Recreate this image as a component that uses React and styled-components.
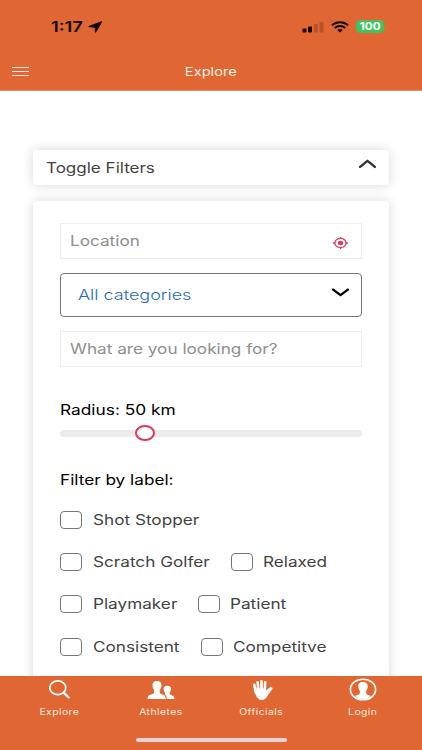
import React, { useState } from 'react'
import styled, { createGlobalStyle } from "styled-components";

const GlobalStyle = createGlobalStyle`
* {
box-sizing: border-box;
}
body {
margin: 0;
background-color: white;
font-family: Inter, "Liberation Sans", sans-serif;
}
`
const Container = styled.div`
width: 422px;
height: 750px;
display: flex;
flex-direction: column;
overflow: hidden;
background-color: white;
`
const Text = styled.span`
display: inline-block;
white-space: nowrap;
font-family: ${props=> props.$family || "inherit"};
font-size: ${props=> props.$size || 14.2}px;
font-weight: ${props=> props.$weight || 400};
line-height: 20px;
color: ${props=> props.$color || "#434343"};
transform: scaleX(${props=> props.$stretch || 1.21});
transform-origin: ${props=> props.$origin || "left"} center;
letter-spacing: ${props=> props.$spacing || 0}px;
`

// top
const Header = styled.header`
height: 91px;
flex: none;
background-color: #e06733;
border-bottom: 1px solid #e38b66;
`
const StatusBar = styled.div`
height: 53px;
padding: 0 36px 0 51px;
display: flex;
align-items: center;
justify-content: space-between;
`
const Clock = styled.div`
display: flex;
align-items: center;
`
const ClockText = styled.div`
width: 37px;
display: flex;
`
const Status = styled.div`
display: flex;
align-items: center;
`
const Signal = styled.svg`
width: 22px;
height: 12px;
margin-right: 7px;
`
const Wifi = styled.svg`
width: 18px;
height: 12px;
margin-right: 7px;
`
const Battery = styled.div`
width: 28px;
height: 12.5px;
border-radius: 4.5px;
background-color: #3fc35c;
display: flex;
align-items: center;
justify-content: center;
`
const BatteryNub = styled.div`
width: 1.5px;
height: 4px;
margin-left: 0.5px;
border-radius: 0 2px 2px 0;
background-color: #7fa447;
`
const TitleBar = styled.div`
height: 37px;
padding: 0 12px;
display: grid;
grid-template-columns: 60px 1fr 60px;
align-items: center;
justify-items: center;
`
const Menu = styled.button`
width: 17px;
height: 9px;
padding: 0;
border: none;
background: none;
justify-self: start;
display: flex;
flex-direction: column;
justify-content: space-between;
`
const MenuLine = styled.span`
width: 17px;
height: 1.4px;
background-color: #fbe9df;
`

// filters
const Main = styled.main`
flex: 1;
min-height: 0;
padding: 59px 33px 0;
overflow: hidden;
`
const Card = styled.section`
background-color: white;
border-radius: 4px;
box-shadow: 0 0 12px rgba(0, 0, 0, 0.16);
`
const Toggle = styled(Card)`
height: 35px;
padding: 0 13px;
margin-bottom: 16px;
display: flex;
align-items: center;
justify-content: space-between;
`
const Panel = styled(Card)`
height: 520px;
padding: 22px 27px;
`
const Chevron = styled.svg`
width: 17px;
height: 9.5px;
margin-bottom: ${props=> props.$raise || 0}px;
fill: none;
stroke: ${props=> props.$color};
stroke-width: 2.2;
stroke-linecap: round;
stroke-linejoin: round;
`
const Field = styled.div`
height: 36px;
padding: 0 13px 0 9px;
border: 1px solid #ececec;
display: flex;
align-items: center;
justify-content: space-between;
`
const Select = styled.div`
height: 44px;
margin: 14px 0;
padding: 0 12px 0 17px;
border: 1px solid #757575;
border-radius: 4px;
display: flex;
align-items: center;
justify-content: space-between;
`
const Target = styled.svg`
width: 15px;
height: 12px;
margin-top: 4px;
`
const Heading = styled.div`
height: 20px;
margin-top: ${props=> props.$top}px;
`
const Slider = styled.div`
height: 16px;
margin-top: 6px;
display: flex;
align-items: center;
`
const Track = styled.div`
flex: 1;
height: 7px;
padding-left: 75px;
border-radius: 4px;
background-color: #ebebeb;
display: flex;
align-items: center;
`
const Thumb = styled.div`
width: 20px;
height: 16px;
flex: none;
border: 2px solid #dc3a58;
border-radius: 50%;
background-color: white;
`
const Labels = styled.div`
margin-top: 10px;
`
const LabelRow = styled.div`
height: 42.2px;
display: flex;
align-items: center;
`
const Label = styled.label`
width: ${props=> props.$width}px;
flex: none;
display: flex;
align-items: center;
`
const Check = styled.input`
appearance: none;
width: 22px;
height: 18px;
margin: 0 10.5px 0 0;
flex: none;
border: 1px solid #777;
border-radius: 4px;
background-color: ${props=> props.checked ? "#dc3a58" : "white"};
`

// bottom
const TabBar = styled.nav`
height: 74px;
flex: none;
background-color: #e06733;
display: flex;
flex-direction: column;
align-items: center;
`
const Tabs = styled.div`
width: 404px;
height: 62px;
display: flex;
`
const Tab = styled.div`
flex: 1;
display: flex;
flex-direction: column;
align-items: center;
svg {
width: ${props=> props.$icon}px;
height: 26px;
flex: none;
}
`
const HomeBar = styled.div`
width: 151px;
height: 4px;
border-radius: 3px;
background-color: #e2d3d5;
`

const rows = [
    [{ name: "Shot Stopper", width: 170 }],
    [{ name: "Scratch Golfer", width: 170.5 }, { name: "Relaxed", width: 100 }],
    [{ name: "Playmaker", width: 137.5 }, { name: "Patient", width: 100 }],
    [{ name: "Consistent", width: 140.5 }, { name: "Competitve", width: 130 }],
]

const SearchIcon = () => (
    <svg viewBox="0 0 22 26" fill="none" stroke="white" strokeWidth="1.7">
        <ellipse cx="8.8" cy="11.8" rx="8" ry="6.9"/>
        <path d="M14.6 16.7l5 4.6" strokeWidth="2.3" strokeLinecap="round"/>
    </svg>
)

const PeopleIcon = () => (
    <svg viewBox="0 0 28 26" fill="white">
        <path d="M10 5C6.800 5 5.400 6.800 5.500 9.300c.1 1.900.5 3.300 1.400 4.400.5.900.4 3.100-.3 3.700-.8.700-2.900 1-4.400 1.800C1 19.900.6 21 .5 23h18.200c-.1-2-.5-3.100-1.700-3.800-1.500-.8-2.900-1.100-3.700-1.800-.7-.6-.8-2.800-.3-3.700.9-1.100 1.400-2.500 1.500-4.400C14.600 6.800 13.200 5 10 5z"/>
        <path d="M20.300 9.700c-2.600 0-3.800 1.400-3.700 3.400.1 1.500.5 2.500 1.200 3.300.3.600.3 1.600-.1 2.100 1.300.7 2 1.600 2.100 4.500h7.700c-.1-1.800-.5-2.600-1.500-3.100-1.200-.6-2.300-.8-2.900-1.300-.5-.4-.5-1.600-.2-2.200.7-.8 1.100-1.800 1.200-3.300.1-2-1.200-3.400-3.800-3.400z"/>
    </svg>
)

const HandIcon = () => (
    <svg viewBox="0 0 24 26" fill="none" stroke="white" strokeWidth="2.6" strokeLinecap="round" strokeLinejoin="round">
        <path d="M4.300 8.700l1.500 8M7.600 6.200l.9 9M11.500 5.200v10M15.200 6.400l-.5 9"/>
        <path d="M4.600 12.500l1 4.500c.6 3.200 2.400 6.700 5.800 6.700 3 0 4.500-1.300 6-4.200l4.500-6.300c1.300-1.600-.5-2.400-2-1.500l-4 3.200-.5-2z" fill="white" strokeWidth="0.6"/>
    </svg>
)

const ContactIcon = () => (
    <svg viewBox="0 0 28 26">
        <ellipse cx="14" cy="13.500" rx="12.600" ry="10.300" fill="none" stroke="white" strokeWidth="1.600"/>
        <path d="M13.800 6c-3.300 0-4.700 1.800-4.600 4.300.1 1.800.5 3.100 1.400 4.200.5.9.4 3.200-.3 3.800-.8.6-2.800.9-4.300 1.600 1.900 2 4.800 3.300 8 3.300s6.100-1.300 8-3.300c-1.600-.7-3.500-1-4.300-1.600-.7-.6-.8-2.900-.3-3.800.8-1.100 1.300-2.400 1.400-4.200.1-2.500-1.700-4.300-5-4.300z" fill="white"/>
    </svg>
)

const tabs = [
    { name: "Explore", icon: <SearchIcon/>, width: 22 },
    { name: "Athletes", icon: <PeopleIcon/>, width: 28 },
    { name: "Officials", icon: <HandIcon/>, width: 24 },
    { name: "Login", icon: <ContactIcon/>, width: 28 },
]

const App = () => {

    const [picked, setPicked] = useState([]);
    const handleCheck = (name)=>{
        setPicked(picked.includes(name) ? picked.filter((p)=> p !== name) : [...picked, name]);
    };

    return (
        <Container>
            <GlobalStyle/>
            <Header>
                <StatusBar>
                    <Clock>
                        <ClockText><Text $size={14.8} $weight={600} $color="#160500" $stretch={1.24}>1:17</Text></ClockText>
                        <svg width="15" height="12" viewBox="0 0 15 12">
                            <path d="M13.400.9L1.200 5.500l5.900.5.500 4.900z" fill="#160500" stroke="#160500" strokeWidth="1.300" strokeLinejoin="round"/>
                        </svg>
                    </Clock>
                    <Status>
                        <Signal viewBox="0 0 22 12" fill="#160500">
                            <rect x="0.5" y="7.500" width="4" height="4" rx="1"/>
                            <rect x="6" y="5.500" width="4" height="6" rx="1"/>
                            <rect x="11.800" y="3" width="4" height="8.500" rx="1" fill="#b95127"/>
                            <rect x="17.500" y="0.800" width="4" height="10.700" rx="1" fill="#b95127"/>
                        </Signal>
                        <Wifi viewBox="0 0 18 12" fill="none" stroke="#160500" strokeWidth="2">
                            <path d="M.9 4.300C5.300.2 12.700.2 17.100 4.300"/>
                            <path d="M3.800 7C6.600 4.400 11.400 4.400 14.200 7"/>
                            <path d="M6.300 8.900C7.800 7.600 10.200 7.600 11.700 8.900L9 11.500z" fill="#160500" stroke="none"/>
                        </Wifi>
                        <Battery><Text $size={10.4} $weight={700} $color="white" $stretch={1.13} $origin="center">100</Text></Battery>
                        <BatteryNub/>
                    </Status>
                </StatusBar>
                <TitleBar>
                    <Menu><MenuLine/><MenuLine/><MenuLine/></Menu>
                    <Text $size={12.3} $color="#fdeee6" $origin="center" $stretch={1.19}>Explore</Text>
                </TitleBar>
            </Header>
            <Main>
                <Toggle>
                    <Text $stretch={1.2}>Toggle Filters</Text>
                    <Chevron $color="#333" $raise={7} viewBox="0 0 16 9"><path d="M1 7.500L8 1.700l7 5.800"/></Chevron>
                </Toggle>
                <Panel>
                    <Field>
                        <Text $color="#8e8e8e">Location</Text>
                        <Target viewBox="0 0 15 12" fill="none" stroke="#d9405d" strokeWidth="1.300">
                            <ellipse cx="7.500" cy="6" rx="5.700" ry="4.600"/>
                            <ellipse cx="7.500" cy="6" rx="2.700" ry="2.200" fill="#d9405d" stroke="none"/>
                            <path d="M7.500 0v2M7.500 10v2M0 6h2.500M12.500 6H15"/>
                        </Target>
                    </Field>
                    <Select>
                        <Text $size={14.4} $weight={300} $color="#1f6db5" $stretch={1.25}>All categories</Text>
                        <Chevron $color="#000" $raise={5} viewBox="0 0 16 9"><path d="M1 1.500l7 5.300 7-5.300"/></Chevron>
                    </Select>
                    <Field><Text $color="#8e8e8e">What are you looking for?</Text></Field>
                    <Heading $top={32}><Text $color="#000" $stretch={1.22}>Radius: 50 km</Text></Heading>
                    <Slider>
                        <Track><Thumb/></Track>
                    </Slider>
                    <Heading $top={28}><Text $color="#000">Filter by label:</Text></Heading>
                    <Labels>
                        {rows.map((row, i)=> (
                        <LabelRow key={i}>
                            {row.map((item)=> (
                            <Label $width={item.width} key={item.name}>
                                <Check type="checkbox" checked={picked.includes(item.name)} onChange={() => handleCheck(item.name)}/>
                                <Text>{item.name}</Text>
                            </Label>
                            ))}
                        </LabelRow>
                        ))}
                    </Labels>
                </Panel>
            </Main>
            <TabBar>
                <Tabs>
                    {tabs.map((tab)=> (
                    <Tab $icon={tab.width} key={tab.name}>
                        {tab.icon}
                        <Text $size={9} $color="#fdeadf" $origin="center" $spacing={0.4} $stretch={1.15}>{tab.name}</Text>
                    </Tab>
                    ))}
                </Tabs>
                <HomeBar/>
            </TabBar>
        </Container>
    )
}

export default App
